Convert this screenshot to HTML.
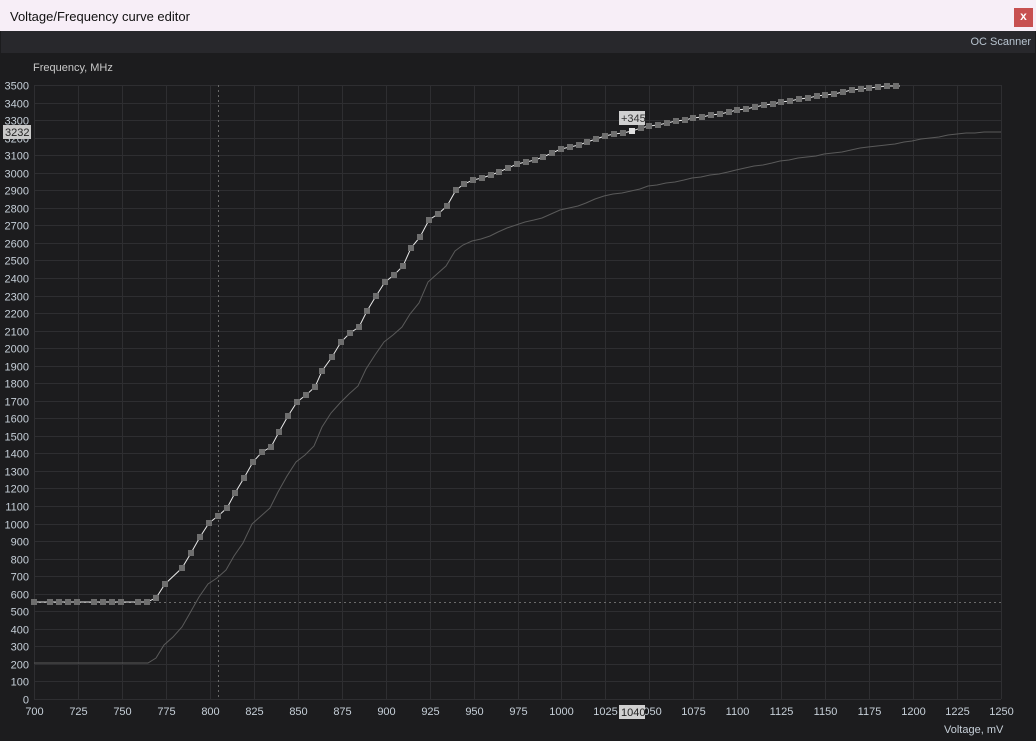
<!DOCTYPE html>
<html><head><meta charset="utf-8"><style>
html,body{margin:0;padding:0;width:1036px;height:741px;overflow:hidden;background:#1c1c1e;font-family:"Liberation Sans",sans-serif}
#title{position:absolute;left:0;top:0;width:1036px;height:31px;background:#f7eef7;}
#title span{position:absolute;left:10px;top:9px;font-size:13px;color:#111}
#close{position:absolute;left:1014px;top:8px;width:19px;height:19px;background:#c75050;color:#fff;font-size:12px;font-weight:bold;text-align:center;line-height:17px}
#bar{position:absolute;left:1px;top:31px;width:1034px;height:22px;background:#28282c}
#bar span{position:absolute;right:4px;top:5px;font-size:11px;color:#b8c4d0}
svg{position:absolute;left:0;top:0}
</style></head><body>
<div id="title"><span>Voltage/Frequency curve editor</span><div id="close">x</div></div>
<div id="bar"><span>OC Scanner</span></div>
<svg id="s" width="1036" height="741" xmlns="http://www.w3.org/2000/svg" font-family="Liberation Sans, sans-serif" font-size="11">
<text x="33" y="71" fill="#c8c8c8">Frequency, MHz</text>
<g id="grid" stroke="#2e2e31" stroke-width="1"></g>
<g id="lab" fill="#c6cfd8"></g>
<line x1="218.5" y1="85" x2="218.5" y2="699" stroke="#6a6a6a" stroke-dasharray="2,3"/>
<line x1="34" y1="602.5" x2="1001" y2="602.5" stroke="#6a6a6a" stroke-dasharray="2,3"/>
<polyline fill="none" stroke="#5a5a5a" stroke-width="1" points="34,663 148,663 156,658 164,645 173,637 182,627 190,613 199,597 208,584 217,578 226,570 234,556 243,543 252,524 261,516 270,508 278,492 287,476 296,462 305,455 314,446 322,427 331,413 340,403 349,394 358,386 366,369 375,355 384,342 393,335 402,327 410,314 419,303 428,282 437,274 446,266 455,251 463,245 472,241 481,239 490,236 498,232 507,228 516,225 525,222 534,220 542,218 551,214 560,210 569,208 578,206 586,203 595,199 604,196 613,194 622,193 631,191 640,189 648,186 657,185 666,183 675,182 684,180 692,178 701,177 710,175 719,174 728,172 736,170 745,168 754,166 763,165 772,163 780,161 789,160 798,158 807,157 816,156 824,154 833,153 842,152 851,150 860,148 868,147 877,146 886,145 895,144 904,142 912,141 921,139 930,138 939,137 948,135 957,134 966,133 975,133 984,132 1001,132"/>
<polyline id="main" fill="none" stroke="#e8e8e8" stroke-width="1"/>
<g id="sq" fill="#6e6e6e"></g>
<rect x="3" y="125" width="28" height="14" fill="#c8c8c8"/><text x="5" y="136" fill="#222">3232</text>
<rect x="619" y="111" width="26" height="14" fill="#d0d0d0"/><text x="621" y="122" fill="#333">+345</text>
<rect x="619" y="705" width="26" height="14" fill="#d0d0d0"/><text x="621" y="716" fill="#222">1040</text>
<text x="944" y="733" fill="#c6cfd8">Voltage, mV</text>
</svg>
<script>
var ns="http://www.w3.org/2000/svg";
function el(p,t,a,txt){var e=document.createElementNS(ns,t);for(var k in a)e.setAttribute(k,a[k]);if(txt)e.textContent=txt;p.appendChild(e);return e;}
var g=document.getElementById('grid'),lab=document.getElementById('lab');
for(var i=0;i<=35;i++){var y=Math.round(699-i*614/35)+0.5;el(g,'line',{x1:34,y1:y,x2:1001,y2:y});
 el(lab,'text',{x:29,y:y+4,'text-anchor':'end'},String(i*100));}
for(var j=0;j<=22;j++){var x=Math.round(34+j*967/22)+0.5;el(g,'line',{x1:x,y1:85,x2:x,y2:699});
 el(lab,'text',{x:x,y:715,'text-anchor':'middle'},String(700+j*25));}
var P=[[34,602],[50,602],[59,602],[68,602],[77,602],[94,602],[103,602],[112,602],[121,602],[138,602],[147,602],[156,598],[165,584],[182,568],[191,553],[200,537],[209,523],[218,516],[227,508],[235,493],[244,478],[253,462],[262,452],[271,447],[279,432],[288,416],[297,402],[306,395],[315,387],[322,371],[332,357],[341,342],[350,333],[359,327],[367,311],[376,296],[385,282],[394,275],[403,266],[411,248],[420,237],[429,220],[438,214],[447,206],[456,190],[464,184],[473,180],[482,178],[491,175],[499,172],[508,168],[517,164],[526,162],[535,160],[543,157],[552,153],[561,149],[570,147],[579,145],[587,142],[596,139],[605,136],[614,134],[623,133],[632,131],[641,128],[649,126],[658,125],[667,123],[676,121],[685,120],[693,118],[702,117],[711,115],[720,114],[729,112],[737,110],[746,109],[755,107],[764,105],[773,104],[781,102],[790,101],[799,99],[808,98],[817,96],[825,95],[834,94],[843,92],[852,90],[861,89],[869,88],[878,87],[887,86],[896,86],[900,86]];
document.getElementById('main').setAttribute('points',P.map(function(p){return p.join(',')}).join(' '));
var sq=document.getElementById('sq');
P.forEach(function(p,k){if(k==P.length-1)return;var r=el(sq,'rect',{x:p[0]-3,y:p[1]-3,width:6,height:6});if(p[0]==632)r.setAttribute('fill','#e0e0e0');});
</script>
</body></html>
